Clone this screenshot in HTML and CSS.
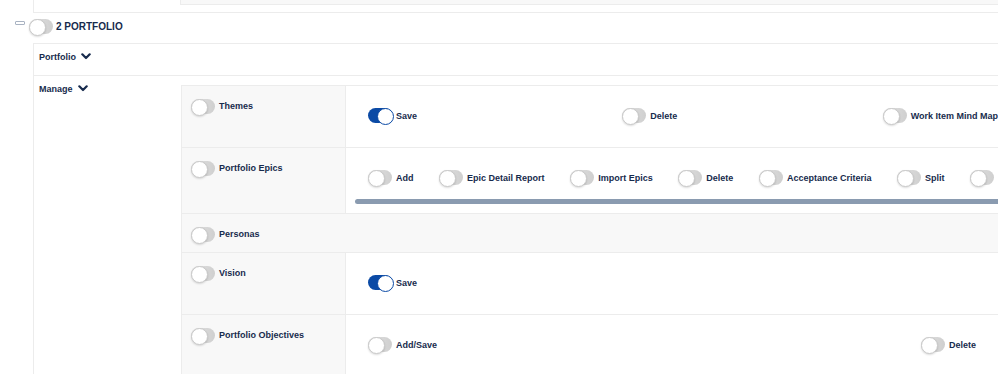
FILE: index.html
```html
<!DOCTYPE html>
<html lang="en">
<head>
    <meta charset="utf-8">
    <title>Role Permissions - Portfolio</title>
    <link rel="stylesheet" href="styles.css">
</head>
<body>
    <div class="prev-section">
        <div class="prev-grid"></div>
    </div>

    <div class="section-head">
        <span class="collapse-icon"></span>
        <span class="toggle"></span>
        <span class="section-title">2 PORTFOLIO</span>
    </div>

    <div class="section-body">
        <div class="group-row">
            <div class="group-label">
                Portfolio
                <svg class="chevron" viewBox="0 0 10 7" width="10" height="7"><polyline points="1.3,1.3 5,5 8.7,1.3"/></svg>
            </div>
        </div>

        <div class="group-row manage">
            <div class="group-label">
                Manage
                <svg class="chevron" viewBox="0 0 10 7" width="10" height="7"><polyline points="1.3,1.3 5,5 8.7,1.3"/></svg>
            </div>

            <div class="perm-table">
                <!-- Themes -->
                <div class="perm-row">
                    <div class="perm-name"><span class="toggle"></span><span>Themes</span></div>
                    <div class="perm-cell">
                        <div class="perm-list cols-themes">
                            <div class="perm"><span class="toggle on"></span><span>Save</span></div>
                            <div class="perm"><span class="toggle"></span><span>Delete</span></div>
                            <div class="perm"><span class="toggle"></span><span>Work Item Mind Map</span></div>
                        </div>
                    </div>
                </div>

                <!-- Portfolio Epics -->
                <div class="perm-row">
                    <div class="perm-name"><span class="toggle"></span><span>Portfolio Epics</span></div>
                    <div class="perm-cell scroll">
                        <div class="perm-list inline">
                            <div class="perm"><span class="toggle"></span><span>Add</span></div>
                            <div class="perm"><span class="toggle"></span><span>Epic Detail Report</span></div>
                            <div class="perm"><span class="toggle"></span><span>Import Epics</span></div>
                            <div class="perm"><span class="toggle"></span><span>Delete</span></div>
                            <div class="perm"><span class="toggle"></span><span>Acceptance Criteria</span></div>
                            <div class="perm"><span class="toggle"></span><span>Split</span></div>
                            <div class="perm"><span class="toggle"></span></div>
                        </div>
                        <div class="scrollbar"></div>
                    </div>
                </div>

                <!-- Personas -->
                <div class="perm-row full">
                    <div class="perm-name"><span class="toggle"></span><span>Personas</span></div>
                </div>

                <!-- Vision -->
                <div class="perm-row">
                    <div class="perm-name"><span class="toggle"></span><span>Vision</span></div>
                    <div class="perm-cell">
                        <div class="perm-list">
                            <div class="perm"><span class="toggle on"></span><span>Save</span></div>
                        </div>
                    </div>
                </div>

                <!-- Portfolio Objectives -->
                <div class="perm-row">
                    <div class="perm-name"><span class="toggle"></span><span>Portfolio Objectives</span></div>
                    <div class="perm-cell">
                        <div class="perm-list cols-objectives">
                            <div class="perm"><span class="toggle"></span><span>Add/Save</span></div>
                            <div class="perm"><span class="toggle"></span><span>Delete</span></div>
                        </div>
                    </div>
                </div>
            </div>
        </div>
    </div>
</body>
</html>
```

FILE: styles.css
```css
* {
    margin: 0;
    padding: 0;
    box-sizing: border-box;
}

body {
    font-family: 'Liberation Sans', Arial, sans-serif;
    font-size: 9px;
    font-weight: 700;
    color: #172b4d;
    background: #fff;
    overflow: hidden;
    width: 998px;
}

/* previous section, scrolled mostly out of view */
.prev-section {
    margin-left: 33px;
    height: 13px;
    border-left: 1px solid #ececec;
    border-bottom: 1px solid #ececec;
}

.prev-grid {
    margin-left: 146px;
    height: 5px;
    background: #f8f8f8;
    border-left: 1px solid #ececec;
    border-bottom: 1px solid #ececec;
}

/* section header */
.section-head {
    display: flex;
    align-items: center;
    height: 30px;
    padding: 6px 0 9px 15px;
}

.collapse-icon {
    width: 10px;
    height: 4px;
    border: 1px solid #a9b3c2;
    border-radius: 1px;
    margin-right: 4px;
    align-self: flex-start;
    margin-top: 2px;
}

.section-title {
    font-size: 10px;
    margin-left: 3px;
    margin-top: -1px;
}

/* toggles */
.toggle {
    position: relative;
    display: inline-block;
    flex: none;
    width: 24px;
    height: 15px;
    border-radius: 8px;
    background: linear-gradient(90deg, #e4e4e4 0%, #cfcfcf 100%);
}

.toggle::after {
    content: '';
    position: absolute;
    top: 0;
    left: 0;
    width: 15px;
    height: 15px;
    border-radius: 50%;
    background: #fff;
    border: 1px solid #c9c9c9;
    box-shadow: 0 1px 2px rgba(0, 0, 0, 0.15);
}

.toggle.on {
    background: #0b4aa5;
}

.toggle.on::after {
    left: 9px;
    border-color: #0b4aa5;
    box-shadow: none;
}

/* section body */
.section-body {
    margin-left: 33px;
    border-left: 1px solid #ececec;
}

.group-row {
    border-top: 1px solid #ececec;
    min-height: 32px;
}

.group-label {
    display: flex;
    align-items: center;
    height: 21px;
    padding: 4px 0 0 5px;
}

.chevron {
    margin-left: 5px;
    fill: none;
    stroke: #172b4d;
    stroke-width: 2.2;
    stroke-linecap: round;
    stroke-linejoin: round;
}

.group-row.manage {
    display: flex;
    align-items: flex-start;
}

.manage .group-label {
    width: 147px;
    flex: none;
}

/* permission table */
.perm-table {
    flex: 1;
    margin-top: 9px;
    border-top: 1px solid #ececec;
    border-left: 1px solid #ececec;
    overflow: hidden;
}

.perm-row {
    display: flex;
    border-bottom: 1px solid #ececec;
}

.perm-row.full {
    background: #f8f8f8;
    height: 39px;
}

.perm-name {
    display: flex;
    align-items: flex-start;
    width: 164px;
    flex: none;
    padding: 13px 9px 0 9px;
    background: #f8f8f8;
    border-right: 1px solid #ececec;
}

.perm-row.full .perm-name {
    border-right: none;
}

.perm-name .toggle {
    margin-right: 4px;
}

.perm-name span:last-child {
    line-height: 15px;
}

.perm-cell {
    flex: 1;
    min-width: 0;
    padding: 22px 0 24px 22px;
    overflow: hidden;
}

.perm-row:last-child .perm-cell {
    padding-bottom: 40px;
}

.perm-cell.scroll {
    padding: 22px 0 9px 9px;
}

.perm-list {
    display: flex;
    white-space: nowrap;
}

.scroll .perm-list {
    padding-left: 13px;
}

.perm {
    display: flex;
    align-items: center;
    height: 15px;
}

.perm .toggle {
    margin-right: 4px;
}

.perm-list.inline .perm {
    margin-right: 25.6px;
}

.cols-themes .perm:nth-child(1) {
    width: 257px;
}

.cols-themes .perm:nth-child(2) {
    width: 263px;
}

.cols-objectives .perm:nth-child(1) {
    width: 553px;
}

.scrollbar {
    height: 5px;
    margin-top: 14px;
    border-radius: 3px;
    background: #8a9bb0;
    width: 700px;
}
```
